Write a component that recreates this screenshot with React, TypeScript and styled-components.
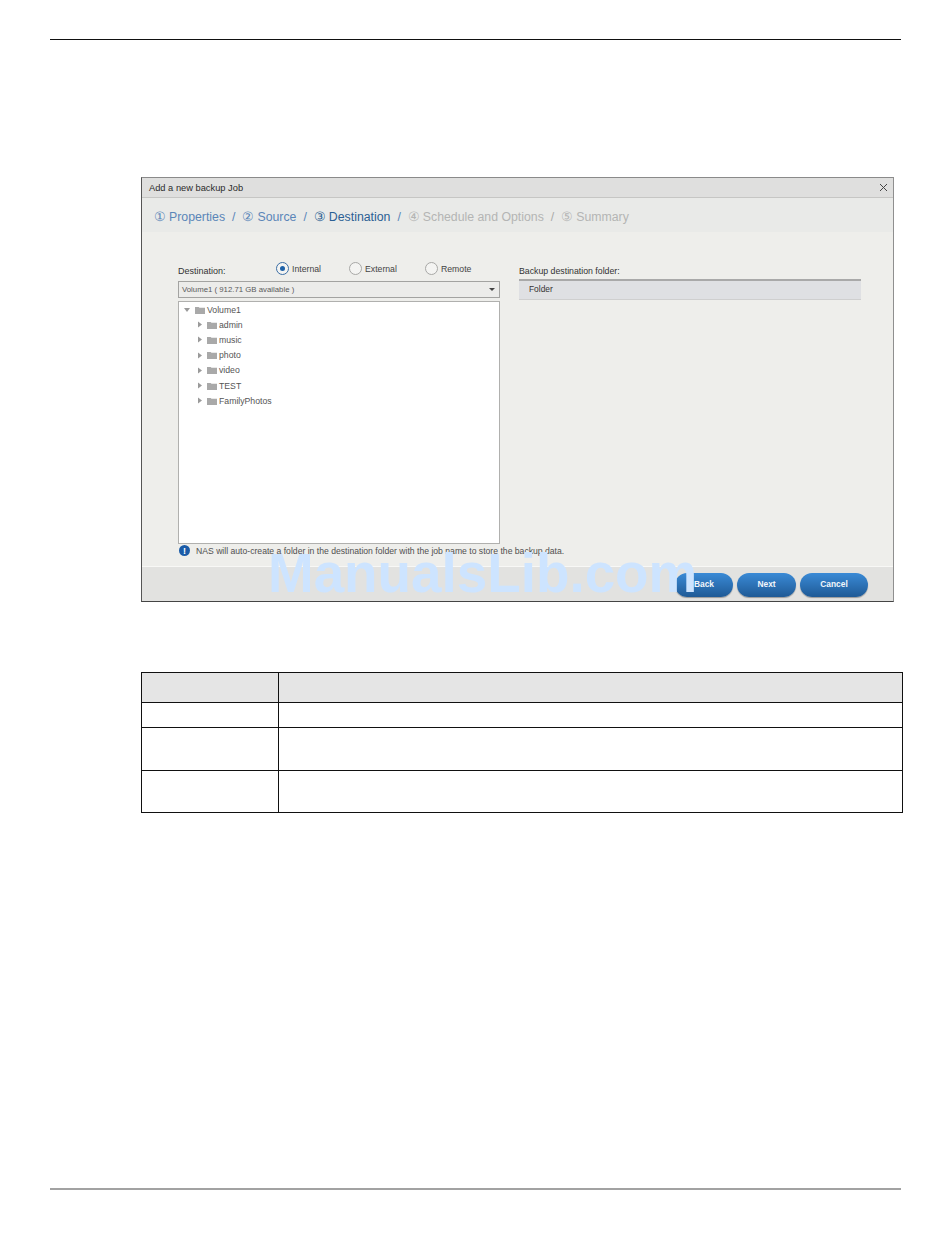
import React from "react";
import styled, { createGlobalStyle } from "styled-components";

const Global = createGlobalStyle`
  html, body { margin: 0; padding: 0; background: #fff; overflow: hidden; }
  body { font-family: "Liberation Sans", Arial, sans-serif; color: #333; }
`;
const Page = styled.div`
  position: relative; width: 950px; height: 1254px; box-sizing: border-box;
  padding-top: 39px; display: flex; flex-direction: column;
`;
const TopRule = styled.div`height: 1px; margin: 0 49px 0 50px; background: #111;`;
const BottomRule = styled.div`height: 2px; margin: auto 49px 64px 50px; background: #a2a2a2;`;
const Dialog = styled.section`
  width: 753px; height: 425px; box-sizing: border-box; margin: 137px 0 0 141px;
  display: flex; flex-direction: column; background: #eeeeeb;
  border: 1px solid #555; border-top: 1px solid #8a8a8a; border-right: 1px solid #8f8f8f; border-bottom: 1px solid #444;
`;
const TitleBar = styled.header`
  height: 20px; flex: none; box-sizing: border-box; display: flex; align-items: center; justify-content: space-between;
  padding: 0 5px 0 7px; background: #dfdfde; border-bottom: 1px solid #c6c6c4; font-size: 9.3px; color: #2b2b2b;
`;
const Steps = styled.nav`
  height: 34px; flex: none; box-sizing: border-box; display: flex; align-items: center; padding: 3px 0 0 12px; background: #e9eae8; font-size: 12.3px;
`;
const Step = styled.span<{ $state: "done" | "active" | "todo" }>`
  color: ${p => p.$state === "done" ? "#5b86b8" : p.$state === "active" ? "#2b5f94" : "#b4b5b4"};
  white-space: nowrap; display: flex; align-items: center;
`;
const Num = styled.span`font-family: "DejaVu Sans", sans-serif; font-size: 12.5px; font-weight: 200; width: 15px; flex: none;`;
const Sep = styled.span<{ $dim?: boolean }>`
  margin: 0 7px; color: ${p => p.$dim ? "#a9aaa9" : "#5b86b8"};
`;
const Body = styled.div`
  flex: 1; display: flex; gap: 19px; padding: 29px 0 0 36px; box-sizing: border-box; min-height: 0;
`;
const LeftCol = styled.div`width: 322px; flex: none; display: flex; flex-direction: column; position: relative;`;
const RightCol = styled.div`width: 342px; flex: none; padding-top: 5px;`;
const DestRow = styled.div`height: 20px; display: flex; align-items: center; font-size: 9px; color: #333;`;
const DestLabel = styled.span`width: 98px; flex: none;`;
const Radio = styled.label<{ $w: number }>`
  width: ${p => p.$w}px; flex: none; display: flex; align-items: center; gap: 3px; font-size: 8.7px; color: #444; margin-top: -5px;
`;
const Circle = styled.span<{ $on?: boolean }>`
  width: 13px; height: 13px; box-sizing: border-box; border-radius: 50%; background: #f4f4f2; display: flex; align-items: center; justify-content: center;
  border: 1px solid ${p => p.$on ? "#3b6ea5" : "#a8a8a6"};
  &::after { content: ""; width: 5px; height: 5px; border-radius: 50%; background: ${p => p.$on ? "#1f62a8" : "transparent"}; }
`;
const Select = styled.div`
  height: 17px; box-sizing: border-box; display: flex; align-items: center; justify-content: space-between;
  padding: 0 4px 0 3px; background: #ececea; border: 1px solid #a3a3a1; font-size: 7.8px; color: #5a5a5a;
`;
const Caret = styled.span`width: 0; height: 0; border-left: 3.5px solid transparent; border-right: 3.5px solid transparent; border-top: 3.5px solid #444;`;
const Tree = styled.div`
  height: 243px; box-sizing: border-box; margin-top: 3px; padding: 0 0 0 5px; background: #fff; border: 1px solid #b0b0ae;
  display: flex; flex-direction: column;
`;
const TreeRow = styled.div<{ $child?: boolean }>`
  height: 15.2px; display: flex; align-items: center; gap: 2px; font-size: 8.7px; color: #555;
  padding-left: ${p => p.$child ? 12 : 0}px;
`;
const Note = styled.div`
  display: flex; align-items: center; gap: 6px; height: 13px; margin: 0 -70px 0 1px; font-size: 8.65px; color: #505050; white-space: nowrap;
`;
const NoteDot = styled.span`
  width: 11px; height: 11px; border-radius: 50%; background: #1b5ca8; color: #fff; font-size: 9px; font-weight: bold;
  display: flex; align-items: center; justify-content: center; flex: none;
`;
const FolderLabel = styled.div`font-size: 8.75px; color: #333; height: 13px;`;
const FolderHead = styled.div`
  height: 21px; box-sizing: border-box; display: flex; align-items: center; padding: 0 0 2px 10px;
  background: #dfe0e3; border-top: 2px solid #a9a9a9; border-bottom: 1px solid #cfcfcf; font-size: 8.4px; color: #333;
`;
const Footer = styled.footer`
  height: 35px; flex: none; box-sizing: border-box; display: flex; justify-content: flex-end; align-items: center; gap: 4px;
  padding: 1px 25px 0 0; background: #e2e2e0; border-top: 1px solid #f8f8f6;
`;
const Btn = styled.button<{ $w: number }>`
  width: ${p => p.$w}px; height: 24px; border: 0; padding: 0 0 1px; border-radius: 12px;
  background: linear-gradient(#3a8ad6, #1f5a96); color: #f2f6fb; font: bold 8.4px "Liberation Sans", Arial, sans-serif;
  box-shadow: 0 1px 1px #9a9a9a;
`;
const Table = styled.table`
  width: 762px; height: 141px; margin: 70px 0 0 141px; border-collapse: collapse; table-layout: fixed; flex: none;
`;
const Cell = styled.td<{ $w?: number; $head?: boolean }>`
  padding: 0; border-left: 1px solid #111; border-right: 1px solid #111;
  ${p => p.$w ? `width: ${p.$w}px;` : ""} background: ${p => p.$head ? "#e5e5e5" : "#fff"};
`;
const Row = styled.tr<{ $h: number; $line: string }>`
  height: ${p => p.$h}px;
  & > td { border-top: 1px solid ${p => p.$line}; border-bottom: 1px solid #111; }
`;
const Watermark = styled.div`
  position: absolute; left: 268px; top: 541px; font: bold 54.8px/64px "Liberation Sans", Arial, sans-serif;
  color: #cde4ff; white-space: nowrap; pointer-events: none;
`;

const Folder = () => (
  <svg width="10" height="8" viewBox="0 0 11 9" preserveAspectRatio="none"><path d="M0 1h4l1 1h6v7H0z" fill="#a9a9a9" /></svg>
);
const Tri = ({ down }: { down?: boolean }) => (
  <svg width="7" height="7" viewBox="0 0 7 7" style={{ marginRight: 2 }}>
    <path d={down ? "M0 2h6L3 6z" : "M2 .5l4 3-4 3z"} fill="#9a9a9a" />
  </svg>
);
const Close = () => (
  <svg width="9" height="9" viewBox="0 0 9 9"><path d="M1 1l7 7M8 1L1 8" stroke="#444" strokeWidth="1" /></svg>
);

const folders = ["admin", "music", "photo", "video", "TEST", "FamilyPhotos"];

export default function App() {
  return (
    <Page>
      <Global />
      <TopRule />
      <Dialog>
        <TitleBar>Add a new backup Job<Close /></TitleBar>
        <Steps>
          <Step $state="done"><Num>①</Num>Properties</Step><Sep>/</Sep>
          <Step $state="done"><Num>②</Num>Source</Step><Sep>/</Sep>
          <Step $state="active"><Num>③</Num>Destination</Step><Sep>/</Sep>
          <Step $state="todo"><Num>④</Num>Schedule and Options</Step><Sep $dim>/</Sep>
          <Step $state="todo"><Num>⑤</Num>Summary</Step>
        </Steps>
        <Body>
          <LeftCol>
            <DestRow>
              <DestLabel>Destination:</DestLabel>
              <Radio $w={73}><Circle $on />Internal</Radio>
              <Radio $w={76}><Circle />External</Radio>
              <Radio $w={60}><Circle />Remote</Radio>
            </DestRow>
            <Select>Volume1 ( 912.71 GB available )<Caret /></Select>
            <Tree>
              <TreeRow><Tri down /><Folder />Volume1</TreeRow>
              {folders.map(f => (
                <TreeRow $child key={f}><Tri /><Folder />{f}</TreeRow>
              ))}
            </Tree>
            <Note><NoteDot>!</NoteDot>NAS will auto-create a folder in the destination folder with the job name to store the backup data.</Note>
          </LeftCol>
          <RightCol>
            <FolderLabel>Backup destination folder:</FolderLabel>
            <FolderHead>Folder</FolderHead>
          </RightCol>
        </Body>
        <Footer>
          <Btn $w={58}>Back</Btn>
          <Btn $w={59}>Next</Btn>
          <Btn $w={68}>Cancel</Btn>
        </Footer>
      </Dialog>
      <Table>
        <tbody>
          <Row $h={30} $line="#111"><Cell $w={136} $head /><Cell $head /></Row>
          <Row $h={25} $line="#555"><Cell /><Cell /></Row>
          <Row $h={43} $line="#a0a0a0"><Cell /><Cell /></Row>
          <Row $h={42} $line="#555"><Cell /><Cell /></Row>
        </tbody>
      </Table>
      <BottomRule />
      <Watermark>ManualsLib.com</Watermark>
    </Page>
  );
}
